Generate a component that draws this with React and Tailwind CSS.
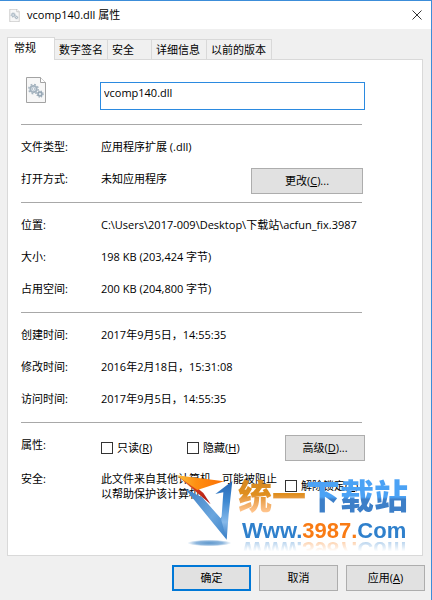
import React, { useState } from "react";

const TABS = [
  { name: "常规", width: "w-12" },
  { name: "数字签名", width: "w-[53px]" },
  { name: "安全", width: "w-11" },
  { name: "详细信息", width: "w-[55px]" },
  { name: "以前的版本", width: "w-[65px]" },
];

const SIZE_ROWS = [
  ["位置:", "C:\\Users\\2017-009\\Desktop\\下载站\\acfun_fix.3987"],
  ["大小:", "198 KB (203,424 字节)"],
  ["占用空间:", "200 KB (204,800 字节)"],
];

const TIME_ROWS = [
  ["创建时间:", "2017年9月5日，14:55:35"],
  ["修改时间:", "2016年2月18日，15:31:08"],
  ["访问时间:", "2017年9月5日，14:55:35"],
];

const BUTTON = "h-[26px] bg-[#e1e1e1] border border-[#adadad] text-center";

function FileIcon({ className }) {
  return (
    <svg className={className} viewBox="0 0 20 26" aria-hidden="true">
      <path d="M.5.5h14l5 5v20H.5z" fill="#f7f7f7" stroke="#a3a3a3" />
      <path d="M14.5.5v5h5" fill="#fff" stroke="#a3a3a3" />
      <circle cx="7.5" cy="12" r="3.2" fill="#dce4ea" stroke="#a3b2be" strokeWidth="1.8" />
      <circle cx="7.5" cy="12" r="4.7" fill="none" stroke="#a3b2be" strokeWidth="1.4" strokeDasharray="1.8 1.9" />
      <circle cx="7.5" cy="12" r="1.2" fill="#fff" stroke="#a3b2be" strokeWidth=".7" />
      <circle cx="14" cy="17" r="2" fill="#dce4ea" stroke="#93a4b2" strokeWidth="1.4" />
      <circle cx="14" cy="17" r="3.1" fill="none" stroke="#93a4b2" strokeWidth="1.1" strokeDasharray="1.2 1.3" />
    </svg>
  );
}

function Divider() {
  return <hr className="mr-[3px] border-t border-[#a8a8a8]" />;
}

function Rows({ rows }) {
  return (
    <dl className="pt-1.5 pb-[7px]">
      {rows.map(([label, value]) => (
        <div key={label} className="flex h-8 items-center">
          <dt className="w-20 shrink-0">{label}</dt>
          <dd className="min-w-0 flex-1 overflow-hidden whitespace-nowrap">{value}</dd>
        </div>
      ))}
    </dl>
  );
}

function Check({ label, accel }) {
  return (
    <label className="flex items-center gap-1 whitespace-nowrap">
      <input type="checkbox" className="size-3 shrink-0 appearance-none border border-[#333] bg-white checked:bg-[#0078d7]" />
      <span>
        {label}(<u>{accel}</u>)
      </span>
    </label>
  );
}

function SiteLogo() {
  return (
    <div className="pointer-events-none absolute top-[470px] left-[170px] flex">
      <svg className="h-20 w-[66px] shrink-0" viewBox="30 30 198 240" aria-hidden="true">
        <defs>
          <linearGradient id="wing" x1="0" x2="1">
            <stop offset="0" stopColor="#f9c03c" />
            <stop offset=".4" stopColor="#ff9012" />
            <stop offset="1" stopColor="#fb6f05" />
          </linearGradient>
          <linearGradient id="tail" x1="0" y1="0" x2="1" y2="1">
            <stop offset="0" stopColor="#f58a1c" />
            <stop offset=".6" stopColor="#c9301c" />
            <stop offset="1" stopColor="#a51210" />
          </linearGradient>
          <linearGradient id="strip" x1="0" y1="0" x2="1" y2="1">
            <stop offset="0" stopColor="#3f7fc4" />
            <stop offset=".6" stopColor="#6aa6de" />
            <stop offset="1" stopColor="#3c82c8" />
          </linearGradient>
          <linearGradient id="blade" x1="0" y1="0" x2="0" y2="1">
            <stop offset="0" stopColor="#2767b5" />
            <stop offset=".35" stopColor="#3f8ad2" />
            <stop offset=".7" stopColor="#86b9ea" />
            <stop offset="1" stopColor="#2f76c0" />
          </linearGradient>
          <radialGradient id="shadow">
            <stop offset="0" stopColor="#5e97cc" />
            <stop offset=".6" stopColor="#8db6dd" />
            <stop offset="1" stopColor="#8db6dd" stopOpacity="0" />
          </radialGradient>
        </defs>
        <ellipse cx="148" cy="246" rx="66" ry="10" fill="url(#shadow)" />
        <path d="M74 82 L128 110 L166 154 L182 172 L190 160 L200 236 Z" fill="url(#strip)" />
        <path d="M217 60 L166 99 L190 94 L184 178 L200 236 L206 160 Z" fill="url(#blade)" />
        <path d="M50 43 L152 130 L130 96 L113 82 Z" fill="url(#tail)" />
        <path d="M50 43 L192 61 L112 87 Z" fill="url(#wing)" />
      </svg>
      <div className="ml-0.5 pt-0.5 whitespace-nowrap">
        <div className="pb-0.5 font-['Noto_Sans_CJK_SC',sans-serif] text-[34px] leading-[44px] font-black">
          <span className="bg-linear-to-b from-[#d88a20] from-30% via-[#e08f1e] to-[#ffc48c] to-85% bg-clip-text text-transparent">
            统一
          </span>
          <span className="bg-linear-to-b from-[#4ba2f5] from-55% to-[#3d7fc8] to-60% bg-clip-text text-transparent">
            下载站
          </span>
        </div>
        <div className="pl-1 font-['Liberation_Sans',sans-serif] text-[22px] leading-6 font-bold text-[#2f80cc] [-webkit-box-reflect:below_-6px_linear-gradient(transparent_40%,rgba(0,0,0,0.5))]">
          Www.<span className="text-[#f97b14]">3987.</span>Com
        </div>
      </div>
    </div>
  );
}

function App() {
  const [tab, setTab] = useState("常规");
  const [fileName, setFileName] = useState("vcomp140.dll");

  return (
    <div className="relative flex min-h-screen flex-col border-t border-r border-[#3c8dd9] bg-[#f0f0f0] font-['Open_Sans','Noto_Sans_CJK_SC',sans-serif] text-[11px] leading-4 text-black">
      <header className="flex h-7 items-center bg-white pr-[9px] pl-[9px]">
        <FileIcon className="h-[13px] w-[11px]" />
        <h1 className="ml-[7px] flex-1 text-[11px]">{fileName} 属性</h1>
        <button aria-label="关闭">
          <svg className="size-[10px]" viewBox="0 0 10 10" fill="none" stroke="#333">
            <path d="M.5.5l9 9M9.5.5l-9 9" />
          </svg>
        </button>
      </header>

      <main className="flex-1 pt-2 pr-2 pl-[7px]">
        <div role="tablist" className="flex items-end">
          {TABS.map((t) => (
            <button
              key={t.name}
              role="tab"
              aria-selected={tab === t.name}
              onClick={() => setTab(t.name)}
              className={`${t.width} shrink-0 border-[#d9d9d9] text-left whitespace-nowrap ${
                tab === t.name
                  ? "relative z-10 -mb-px h-[23px] border-x border-t bg-white pb-0.5 pl-1.5"
                  : "h-5 border-t border-r pl-1"
              }`}
            >
              {t.name}
            </button>
          ))}
        </div>

        <section role="tabpanel" className="border border-[#d9d9d9] bg-white pr-[57px] pb-[54px] pl-[13px]">
          <div className="flex h-16 pt-[17px]">
            <FileIcon className="ml-[5px] h-[26px] w-5" />
            <input
              aria-label="文件名"
              value={fileName}
              onChange={(e) => setFileName(e.target.value)}
              className="mt-[5px] ml-[54px] h-7 min-w-0 flex-1 border border-[#2b8ae0] px-[3px] pb-2 outline-none"
            />
          </div>
          <Divider />

          <dl className="pt-1.5 pb-[7px]">
            <div className="flex h-8 items-center">
              <dt className="w-20 shrink-0">文件类型:</dt>
              <dd>应用程序扩展 (.dll)</dd>
            </div>
            <div className="flex h-8 items-center">
              <dt className="w-20 shrink-0">打开方式:</dt>
              <dd className="flex-1">未知应用程序</dd>
              <dd className="pt-1 pr-0.5">
                <button className={`${BUTTON} w-28`}>
                  更改(<u>C</u>)...
                </button>
              </dd>
            </div>
          </dl>
          <Divider />
          <Rows rows={SIZE_ROWS} />
          <Divider />
          <Rows rows={TIME_ROWS} />
          <Divider />

          <div className="flex items-start pt-3">
            <span className="w-20 shrink-0 pt-0.5">属性:</span>
            <div className="flex h-[26px] flex-1 items-center">
              <div className="w-[86px]">
                <Check label="只读" accel="R" />
              </div>
              <Check label="隐藏" accel="H" />
            </div>
            <button className={`${BUTTON} w-20`}>
              高级(<u>D</u>)...
            </button>
          </div>
          <div className="flex items-start pt-2.5">
            <span className="w-20 shrink-0">安全:</span>
            <p className="w-[184px] shrink-0 leading-[15px]">
              此文件来自其他计算机，可能被阻止
              <br />
              以帮助保护该计算机。
            </p>
            <div className="pt-[7px]">
              <Check label="解除锁定" accel="K" />
            </div>
          </div>
        </section>
      </main>

      <footer className="flex justify-end gap-2 py-[9px] pr-1.5">
        <button className="h-[26px] w-[79px] border-2 border-[#0078d7] bg-[#e1e1e1]">确定</button>
        <button className={`${BUTTON} w-[79px]`}>取消</button>
        <button className={`${BUTTON} w-[79px]`}>
          应用(<u>A</u>)
        </button>
      </footer>

      <SiteLogo />
    </div>
  );
}

export default App;
